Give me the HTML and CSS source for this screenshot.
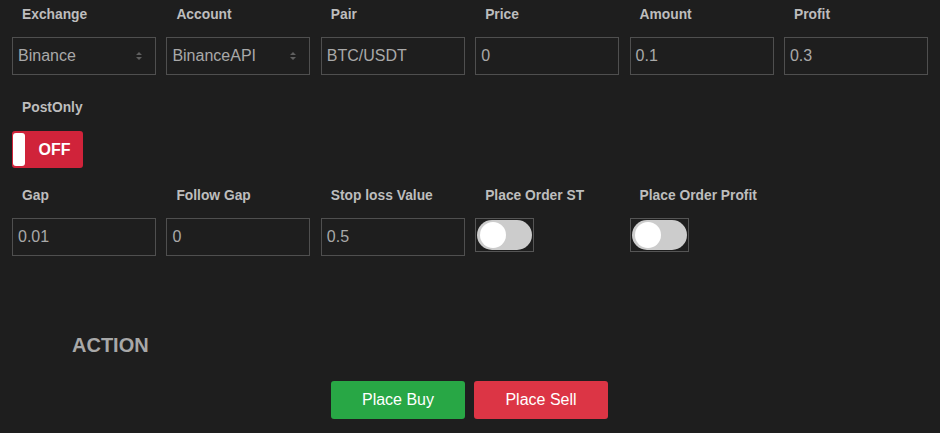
FILE: index.html
```html
<!DOCTYPE html>
<html>
<head>
<meta charset="utf-8">
<link rel="stylesheet" href="styles.css">
</head>
<body>
<div class="page">
  <div class="row row1">
    <div class="field">
      <div class="lbl">Exchange</div>
      <div class="ctrl select"><span>Binance</span>
        <svg class="arr" width="8" height="10" viewBox="0 0 8 10"><path d="M1 4 L4 1 L7 4 Z M1 6 L4 9 L7 6 Z" fill="#5f5f5f"/></svg>
      </div>
    </div>
    <div class="field">
      <div class="lbl">Account</div>
      <div class="ctrl select"><span>BinanceAPI</span>
        <svg class="arr" width="8" height="10" viewBox="0 0 8 10"><path d="M1 4 L4 1 L7 4 Z M1 6 L4 9 L7 6 Z" fill="#5f5f5f"/></svg>
      </div>
    </div>
    <div class="field">
      <div class="lbl">Pair</div>
      <div class="ctrl">BTC/USDT</div>
    </div>
    <div class="field">
      <div class="lbl">Price</div>
      <div class="ctrl">0</div>
    </div>
    <div class="field">
      <div class="lbl">Amount</div>
      <div class="ctrl">0.1</div>
    </div>
    <div class="field">
      <div class="lbl">Profit</div>
      <div class="ctrl">0.3</div>
    </div>
  </div>

  <div class="row row2">
    <div class="field">
      <div class="lbl">PostOnly</div>
      <div class="offtoggle"><span class="knob"></span><span class="offtxt">OFF</span></div>
    </div>
  </div>

  <div class="row row3">
    <div class="field">
      <div class="lbl">Gap</div>
      <div class="ctrl">0.01</div>
    </div>
    <div class="field">
      <div class="lbl">Follow Gap</div>
      <div class="ctrl">0</div>
    </div>
    <div class="field">
      <div class="lbl">Stop loss Value</div>
      <div class="ctrl">0.5</div>
    </div>
    <div class="field">
      <div class="lbl">Place Order ST</div>
      <div class="switch"><span class="pill"><span class="dot"></span></span></div>
    </div>
    <div class="field">
      <div class="lbl">Place Order Profit</div>
      <div class="switch"><span class="pill"><span class="dot"></span></span></div>
    </div>
  </div>

  <div class="action">
    <div class="action-title">ACTION</div>
    <div class="buttons">
      <button class="btn buy">Place Buy</button>
      <button class="btn sell">Place Sell</button>
    </div>
  </div>
</div>
</body>
</html>
```

FILE: styles.css
```css
html, body {
  margin: 0;
  padding: 0;
  background: #1e1e1e;
  font-family: "Liberation Sans", Arial, sans-serif;
}
.page {
  padding: 6px 7px 0 7px;
  width: 927px;
}
.row {
  display: grid;
  grid-template-columns: repeat(6, 154.4px);
}
.field {
  padding: 0 5px;
}
.lbl {
  font-size: 13.8px;
  font-weight: bold;
  line-height: 17px;
  height: 17px;
  color: #bdbdbd;
  padding-left: 10px;
  margin-bottom: 14px;
  white-space: nowrap;
}
.row2 .lbl { margin-bottom: 15px; }
.ctrl {
  box-sizing: border-box;
  width: 144px;
  height: 38px;
  border: 1px solid #4f4f4f;
  color: #a9a9a9;
  font-size: 16px;
  line-height: 36px;
  padding-left: 5px;
  display: flex;
  align-items: center;
  justify-content: space-between;
}
.select .arr {
  margin-right: 12px;
}
.row2 { margin-top: 24px; }
.offtoggle {
  box-sizing: border-box;
  width: 71px;
  height: 37px;
  background: #d0233a;
  border-radius: 3px;
  display: flex;
  align-items: center;
  padding: 2px 2px 2px 1px;
}
.offtoggle .knob {
  width: 12px;
  height: 33px;
  background: #fff;
  border-radius: 3px;
}
.offtoggle .offtxt {
  flex: 1;
  text-align: center;
  color: #fff;
  font-weight: bold;
  font-size: 16px;
  padding-left: 3px;
}
.row3 { margin-top: 19px; }
.switch {
  box-sizing: border-box;
  width: 59px;
  height: 34px;
  border: 1px solid #555;
  padding: 1px;
}
.pill {
  display: flex;
  align-items: center;
  height: 30px;
  border-radius: 15px;
  background: #cccccc;
  padding-left: 3px;
}
.dot {
  width: 26px;
  height: 26px;
  border-radius: 50%;
  background: #fff;
}
.action {
  margin-top: 77px;
}
.action-title {
  font-size: 20px;
  font-weight: bold;
  line-height: 24px;
  color: #a8a8a8;
  padding-left: 65px;
}
.buttons {
  display: flex;
  justify-content: center;
  gap: 9px;
  margin-top: 24px;
  width: 925px;
}
.btn {
  width: 134px;
  height: 38px;
  border: none;
  border-radius: 3px;
  color: #fff;
  font-family: "Liberation Sans", Arial, sans-serif;
  font-size: 16px;
}
.buy { background: #28a745; }
.sell { background: #dc3545; }
```
